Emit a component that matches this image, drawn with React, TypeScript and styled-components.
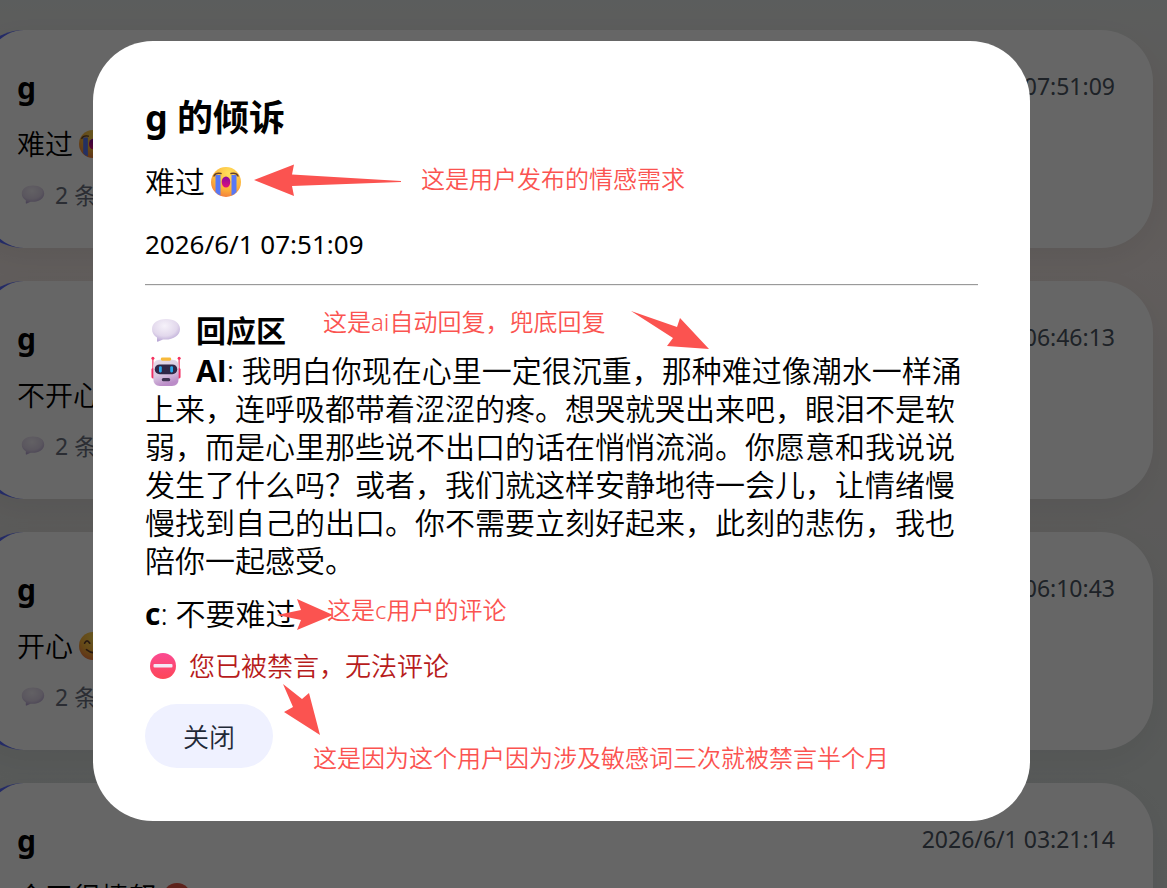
import React from 'react';
import styled, { createGlobalStyle } from 'styled-components';

const Global = createGlobalStyle`
  * { box-sizing: border-box; }
  body {
    margin: 0;
    font-family: "Noto Sans", "Noto Sans CJK SC", sans-serif;
    font-weight: 350;
    color: #000;
  }
  h2, h3, p { margin: 0; }
  h2, h3, strong { font-weight: 700; }
  time { font-weight: 400; }
`;

const Page = styled.main`
  height: 100vh;
  overflow: hidden;
  padding: 30px 14px 0 0;
  background: linear-gradient(180deg, #e4e9e8 0%, #eae4e1 10%, #f2e8e5 30%, #e4e2e0 56%, #dbe0de 86%, #dde2e0 100%);
`;

const Feed = styled.div`
  display: flex;
  flex-direction: column;
  gap: 33px;
  margin-left: -28px;
`;

const Card = styled.article`
  flex: none;
  height: 218px;
  padding: 38px 38px 30px 35px;
  border-left: 10px solid #5b6cff;
  border-radius: 52px;
  background: #fff;
  box-shadow: 0 10px 30px rgba(0, 0, 0, 0.05);
`;

const CardHead = styled.header`
  display: flex;
  justify-content: space-between;
  height: 44px;
  line-height: 40px;
`;

const Author = styled.strong`
  font-size: 30px;
`;

const Stamp = styled.time`
  font-size: 23px;
  line-height: 36px;
  color: #4b5563;
`;

const CardText = styled.p`
  display: flex;
  align-items: center;
  gap: 6px;
  margin-top: 12px;
  font-size: 28px;
  line-height: 40px;
`;

const CardMeta = styled.p`
  display: flex;
  align-items: center;
  gap: 10px;
  margin-top: 13px;
  padding-left: 4px;
  font-size: 23px;
  font-weight: 400;
  line-height: 36px;
  color: #6b7280;
`;

const Overlay = styled.div`
  position: fixed;
  inset: 0;
  display: flex;
  align-items: flex-start;
  padding: 41px 137px 67px 93px;
  background: rgba(0, 0, 0, 0.6);
`;

const Dialog = styled.section`
  position: relative;
  flex: 1;
  min-width: 0;
  padding: 52px 52px 53px;
  border-radius: 60px;
  background: #fff;
  font-size: 30px;
  line-height: 38px;
`;

const Title = styled.h2`
  font-size: 36px;
  line-height: 50px;
`;

const Message = styled.p`
  display: flex;
  align-items: center;
  gap: 6px;
  margin-top: 20px;
`;

const PostedAt = styled.time`
  display: block;
  margin-top: 26px;
  font-size: 26px;
  line-height: 34px;
`;

const Rule = styled.hr`
  margin: 23px 0 26px;
  border: 0;
  border-top: 1px solid #9a9a9a;
  border-bottom: 1px solid #eee;
`;

const SectionTitle = styled.h3`
  display: flex;
  align-items: center;
  gap: 15px;
  padding-left: 6px;
  margin-bottom: 2px;
  font-size: 30px;
`;

const Reply = styled.p`
  margin-bottom: 15px;
`;

const ReplyAuthor = styled.strong`
  font-family: "Open Sans", "Noto Sans CJK SC", sans-serif;
`;

const Banned = styled.p`
  display: flex;
  align-items: center;
  gap: 13px;
  margin: 16px 0 21px;
  padding-left: 5px;
  font-size: 26px;
  line-height: 34px;
  color: #b71c1c;
`;

const CloseButton = styled.button`
  display: block;
  height: 64px;
  padding: 0 38px;
  border: 0;
  border-radius: 32px;
  background: #eff1ff;
  color: #1f2937;
  font-family: inherit;
  font-size: 26px;
  font-weight: inherit;
`;

const Note = styled.span<{ $x: number; $y: number }>`
  position: absolute;
  left: ${(p) => p.$x}px;
  top: ${(p) => p.$y}px;
  font-size: 24px;
  line-height: 32px;
  white-space: nowrap;
  color: #fb5350;
`;

const Arrows = styled.svg`
  position: absolute;
  left: 0;
  top: 0;
  width: 937px;
  height: 780px;
  fill: #fb5350;
  pointer-events: none;
`;

const Glyph = styled.svg<{ $w: number }>`
  flex: none;
  width: ${(p) => p.$w}px;
  height: ${(p) => p.$w}px;
`;

const RobotSlot = styled.span`
  display: inline-block;
  width: 51px;
  padding-left: 6px;
  svg { display: block; margin-bottom: -4px; }
`;

const Defs = styled.svg`
  position: absolute;
  width: 0;
  height: 0;
`;

function Gradients() {
  return (
    <Defs aria-hidden="true">
      <defs>
        <radialGradient id="face" cx="0.6" cy="0.2" r="0.9">
          <stop offset="0" stopColor="#ffe05c" />
          <stop offset="0.6" stopColor="#fdb43a" />
          <stop offset="1" stopColor="#f0703f" />
        </radialGradient>
        <linearGradient id="mouth" x1="0" y1="0" x2="0" y2="1">
          <stop offset="0" stopColor="#8a0a9e" />
          <stop offset="1" stopColor="#e0107c" />
        </linearGradient>
        <radialGradient id="bubble" cx="0.45" cy="0.3" r="0.75">
          <stop offset="0" stopColor="#f6f2fa" />
          <stop offset="0.6" stopColor="#e2d8ec" />
          <stop offset="1" stopColor="#b09cd0" />
        </radialGradient>
        <linearGradient id="bot" x1="0" y1="0" x2="0.3" y2="1">
          <stop offset="0" stopColor="#e6ddea" />
          <stop offset="0.6" stopColor="#d8c8e0" />
          <stop offset="1" stopColor="#bb8cc8" />
        </linearGradient>
        <linearGradient id="stop" x1="0" y1="0" x2="0" y2="1">
          <stop offset="0" stopColor="#fb4a92" />
          <stop offset="1" stopColor="#fd4657" />
        </linearGradient>
      </defs>
    </Defs>
  );
}

const Crying = ({ size }: { size: number }) => (
  <Glyph $w={size} viewBox="0 0 30 30">
    <circle cx="15" cy="15" r="15" fill="url(#face)" />
    <path d="M4.500 8h5v20.500Q6 27 4.500 25zM20.500 8h5v17q-2 2.500-5 3.500z" fill="#5878f5" />
    <ellipse cx="15" cy="15" rx="4.300" ry="5.600" fill="url(#mouth)" />
    <path d="M3 9q1.500-3.500 7-2.500M20 6.500q5.500-1 7 2.500" fill="none" stroke="#65402c" strokeWidth="1.500" strokeLinecap="round" />
  </Glyph>
);

const Smiling = ({ size }: { size: number }) => (
  <Glyph $w={size} viewBox="0 0 30 30">
    <circle cx="15" cy="15" r="15" fill="url(#face)" />
    <path d="M6 12q2.500-5 5.500 0M18.500 12q2.500-5 5.500 0M8 19q7 6 14 0" fill="none" stroke="#65402c" strokeWidth="1.800" strokeLinecap="round" />
  </Glyph>
);

const Angry = ({ size }: { size: number }) => (
  <Glyph $w={size} viewBox="0 0 30 30">
    <circle cx="15" cy="15" r="15" fill="#e85545" />
    <path d="M7 12l6 3M23 12l-6 3M9 23q6-5 12 0" fill="none" stroke="#4a1d20" strokeWidth="2" strokeLinecap="round" />
  </Glyph>
);

const Bubble = ({ size }: { size: number }) => (
  <Glyph $w={size} viewBox="0 0 30 30">
    <path d="M15 3C6.500 3 1 7.300 1 13c0 4 2 6.800 5 8.500V25q0 1 1.200.6L12 23.500c10 .8 17-4 17-10.500C29 7 23.500 3 15 3z" fill="url(#bubble)" />
  </Glyph>
);

const Robot = ({ size }: { size: number }) => (
  <Glyph $w={size} viewBox="0 0 32 32">
    <path d="M2 2.500V14M30 2.500V14" stroke="#f13b68" strokeWidth="1.300" />
    <circle cx="2" cy="2.500" r="1.600" fill="#f5315e" />
    <circle cx="30" cy="2.500" r="1.600" fill="#f5315e" />
    <rect x="0.500" y="13" width="4" height="11" rx="1.500" fill="#f12f62" />
    <rect x="27.500" y="13" width="4" height="11" rx="1.500" fill="#f12f62" />
    <path d="M9 4h14q6.500 0 6.500 7v13q0 8-7 8h-13q-7 0-7-8V11Q2.500 4 9 4z" fill="url(#bot)" />
    <rect x="10.500" y="1.500" width="11" height="3.500" rx="1.500" fill="#f7b93a" />
    <rect x="4" y="9" width="24" height="10.500" rx="5.200" fill="#2f2747" />
    <rect x="8.500" y="11" width="3" height="6.500" rx="1.200" fill="#28a8ee" />
    <rect x="20.500" y="11" width="3" height="6.500" rx="1.200" fill="#28a8ee" />
    <rect x="11.500" y="23.500" width="9" height="3.500" rx="1.700" fill="#403452" />
  </Glyph>
);

const NoEntry = ({ size }: { size: number }) => (
  <Glyph $w={size} viewBox="0 0 26 26">
    <circle cx="13" cy="13" r="13" fill="url(#stop)" />
    <rect x="3.500" y="11" width="19" height="3.600" rx="1" fill="#f4e8f6" />
  </Glyph>
);

const posts = [
  { text: '难过', icon: <Crying size={28} />, time: '2026/6/1 07:51:09' },
  { text: '不开心', icon: null, time: '2026/6/1 06:46:13' },
  { text: '开心', icon: <Smiling size={28} />, time: '2026/6/1 06:10:43' },
  { text: '今天很愤怒', icon: <Angry size={28} />, time: '2026/6/1 03:21:14' },
];

export default function App() {
  return (
    <>
      <Global />
      <Gradients />
      <Page>
        <Feed>
          {posts.map((post) => (
            <Card key={post.time}>
              <CardHead>
                <Author>g</Author>
                <Stamp>{post.time}</Stamp>
              </CardHead>
              <CardText>
                {post.text}
                {post.icon}
              </CardText>
              <CardMeta>
                <Bubble size={24} />2 条
              </CardMeta>
            </Card>
          ))}
        </Feed>
      </Page>
      <Overlay>
        <Dialog role="dialog" aria-modal="true" aria-labelledby="dialog-title">
          <Title id="dialog-title">g 的倾诉</Title>
          <Message>
            难过
            <Crying size={30} />
          </Message>
          <PostedAt>2026/6/1 07:51:09</PostedAt>
          <Rule />
          <SectionTitle>
            <Bubble size={30} />
            回应区
          </SectionTitle>
          <Reply>
            <RobotSlot>
              <Robot size={30} />
            </RobotSlot>
            <ReplyAuthor>AI</ReplyAuthor>: 我明白你现在心里一定很沉重，那种难过像潮水一样涌上来，连呼吸都带着涩涩的疼。想哭就哭出来吧，眼泪不是软弱，而是心里那些说不出口的话在悄悄流淌。你愿意和我说说发生了什么吗？或者，我们就这样安静地待一会儿，让情绪慢慢找到自己的出口。你不需要立刻好起来，此刻的悲伤，我也陪你一起感受。
          </Reply>
          <Reply>
            <ReplyAuthor>c</ReplyAuthor>: 不要难过
          </Reply>
          <Banned>
            <NoEntry size={26} />
            您已被禁言，无法评论
          </Banned>
          <CloseButton type="button">关闭</CloseButton>
          <Arrows viewBox="0 0 937 780" aria-hidden="true">
            <path d="M161 139L201 123.500L199 133.500L308 140L308 141L199 145L201 155z" />
            <path d="M538 270L584 286L587 277L616 308L574 305L580 297z" />
            <path d="M184 574L208 569L204 558L240 574L204 589L208 579z" />
            <path d="M190 643L209 658L216 652L227 694L191 671L200 666z" />
          </Arrows>
          <Note $x={328} $y={122}>这是用户发布的情感需求</Note>
          <Note $x={230} $y={265}>这是ai自动回复，兜底回复</Note>
          <Note $x={234} $y={553}>这是c用户的评论</Note>
          <Note $x={220} $y={701}>这是因为这个用户因为涉及敏感词三次就被禁言半个月</Note>
        </Dialog>
      </Overlay>
    </>
  );
}
